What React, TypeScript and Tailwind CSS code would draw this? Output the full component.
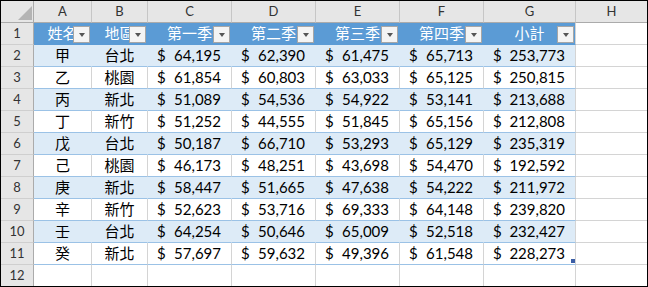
import React from 'react';

const cols = ['A', 'B', 'C', 'D', 'E', 'F', 'G', 'H'];
const widths = ['w-[58px]', 'w-[56px]', 'w-[84px]', 'w-[84px]', 'w-[84px]', 'w-[84px]', 'w-[92px]', 'w-[71px]'];
const heads = ['姓名', '地區', '第一季', '第二季', '第三季', '第四季', '小計'];

const rows: [string, string, string, string, string, string, string][] = [
  ['甲', '台北', '64,195', '62,390', '61,475', '65,713', '253,773'],
  ['乙', '桃園', '61,854', '60,803', '63,033', '65,125', '250,815'],
  ['丙', '新北', '51,089', '54,536', '54,922', '53,141', '213,688'],
  ['丁', '新竹', '51,252', '44,555', '51,845', '65,156', '212,808'],
  ['戊', '台北', '50,187', '66,710', '53,293', '65,129', '235,319'],
  ['己', '桃園', '46,173', '48,251', '43,698', '54,470', '192,592'],
  ['庚', '新北', '58,447', '51,665', '47,638', '54,222', '211,972'],
  ['辛', '新竹', '52,623', '53,716', '69,333', '64,148', '239,820'],
  ['壬', '台北', '64,254', '50,646', '65,009', '52,518', '232,427'],
  ['癸', '新北', '57,697', '59,632', '49,396', '61,548', '228,273'],
];

const cjk = "font-['Noto_Sans_CJK_TC',sans-serif]";
const latin = "font-['Lato','Liberation_Sans',sans-serif]";

function FilterButton() {
  return (
    <div className="absolute right-[1px] bottom-[1px] w-[17px] h-[17px] border border-[#a6a6a6] bg-[#f4f4f4] flex items-center justify-center">
      <div className="w-0 h-0 border-l-[3.5px] border-r-[3.5px] border-t-[4px] border-l-transparent border-r-transparent border-t-[#555]" />
    </div>
  );
}

function RowHead({ n }: { n: number }) {
  return (
    <div className={`w-[33px] shrink-0 h-full flex items-center justify-center bg-[#e6e6e6] border-r border-b border-r-[#ababab] border-b-[#cfcfcf] text-[13px] text-[#333] ${latin}`}>
      {n}
    </div>
  );
}

export default function App() {
  return (
    <div className="w-[648px] h-[287px] border border-black bg-white overflow-hidden">
      {/* column headers */}
      <div className="flex h-[22px]">
        <div className="relative w-[33px] shrink-0 bg-[#e6e6e6] border-r border-b border-r-[#ababab] border-b-[#ababab]">
          <div className="absolute right-[1px] bottom-[2px] w-0 h-0 border-l-[14px] border-t-[14px] border-l-transparent border-t-transparent border-r-[0px] border-b-[0px]" />
          <div className="absolute right-[1px] bottom-[2px] w-[14px] h-[14px] bg-[#b4b4b4] [clip-path:polygon(100%_0,100%_100%,0_100%)]" />
        </div>
        {cols.map((c, i) => (
          <div
            key={c}
            className={`${widths[i]} shrink-0 flex items-center justify-center bg-[#e6e6e6] border-b border-b-[#ababab] ${i < 7 ? 'border-r border-r-[#c6c6c6]' : ''} text-[13px] text-[#333] ${latin}`}
          >
            {c}
          </div>
        ))}
      </div>

      {/* table header row */}
      <div className="flex h-[22px]">
        <RowHead n={1} />
        {heads.map((h, i) => (
          <div
            key={h}
            className={`relative ${widths[i]} shrink-0 flex items-center justify-center bg-[#5b9bd5] border-b border-r border-b-[#5b9bd5] ${i === 6 ? 'border-r-[#d4d4d4]' : 'border-r-[#5b9bd5]'} text-[15px] text-white ${cjk}`}
          >
            {h}
            <FilterButton />
          </div>
        ))}
        <div className="w-[71px] shrink-0 border-b border-b-[#d4d4d4]" />
      </div>

      {/* data rows */}
      {rows.map((r, ri) => {
        const band = ri % 2 === 0;
        const fill = band ? 'bg-[#ddebf7]' : 'bg-white';
        const vline = band ? 'border-r-[#ddebf7]' : 'border-r-[#d4d4d4]';
        return (
          <div key={ri} className="flex h-[22px]">
            <RowHead n={ri + 2} />
            {r.map((v, ci) => {
              const base = `relative ${widths[ci]} shrink-0 h-full border-b border-r border-b-[#9bc2e6] ${ci === 6 ? 'border-r-[#d4d4d4]' : vline} ${fill} text-black`;
              if (ci < 2) {
                return (
                  <div key={ci} className={`${base} flex items-center justify-center text-[15px] ${cjk}`}>
                    {v}
                  </div>
                );
              }
              return (
                <div key={ci} className={`${base} flex items-center justify-between pl-[9px] pr-[10px] text-[15px] ${latin}`}>
                  <span>$</span>
                  <span>{v}</span>
                  {ri === 9 && ci === 6 && (
                    <div className="absolute right-0 bottom-[1px] w-[4px] h-[4px] bg-[#3b5ea6]" />
                  )}
                </div>
              );
            })}
            <div className="w-[71px] shrink-0 border-b border-b-[#d4d4d4]" />
          </div>
        );
      })}

      {/* empty row 12 */}
      <div className="flex h-[22px]">
        <RowHead n={12} />
        {cols.map((c, i) => (
          <div key={c} className={`${widths[i]} shrink-0 h-full border-b border-b-[#d4d4d4] ${i < 7 ? 'border-r border-r-[#d4d4d4]' : ''}`} />
        ))}
      </div>
    </div>
  );
}
